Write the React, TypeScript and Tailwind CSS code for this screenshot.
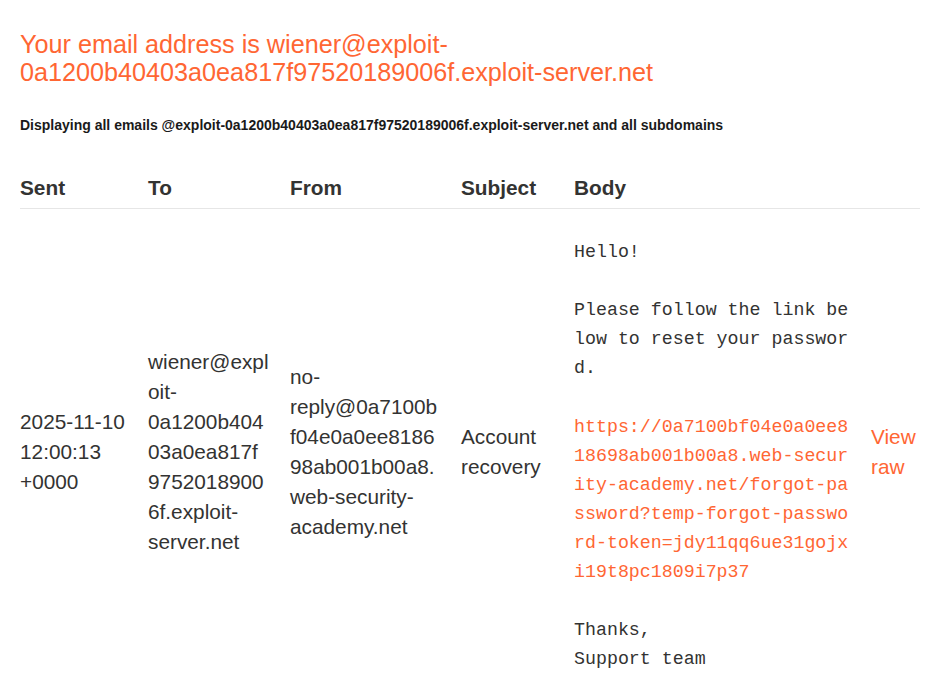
import React from 'react';

const orange = 'text-[#ff6633]';

const bodyLines: { text: string; link?: boolean }[] = [
  { text: 'Hello!' },
  { text: '' },
  { text: 'Please follow the link be' },
  { text: 'low to reset your passwor' },
  { text: 'd.' },
  { text: '' },
  { text: 'https://0a7100bf04e0a0ee8', link: true },
  { text: '18698ab001b00a8.web-secur', link: true },
  { text: 'ity-academy.net/forgot-pa', link: true },
  { text: 'ssword?temp-forgot-passwo', link: true },
  { text: 'rd-token=jdy11qq6ue31gojx', link: true },
  { text: 'i19t8pc1809i7p37', link: true },
  { text: '' },
  { text: 'Thanks,' },
  { text: 'Support team' },
];

const Lines: React.FC<{ lines: string[] }> = ({ lines }) => (
  <>
    {lines.map((l, i) => (
      <span key={i} className="block">
        {l}
      </span>
    ))}
  </>
);

export default function App() {
  return (
    <div className="min-h-[692px] bg-white px-5 text-[#333332] font-['Liberation_Sans',Arial,sans-serif]">
      <h1 className={`pt-[31px] text-[25.2px] leading-[27.5px] font-normal ${orange}`}>
        Your email address is wiener@exploit-
        <br />
        0a1200b40403a0ea817f97520189006f.exploit-server.net
      </h1>

      <h4 className="mt-[31px] text-[14px] leading-[16px] font-bold text-[#1a1a1a]">
        Displaying all emails @exploit-0a1200b40403a0ea817f97520189006f.exploit-server.net and all subdomains
      </h4>

      <table className="mt-[40px] w-[900px] border-collapse text-[20.8px] leading-[30px]">
        <thead>
          <tr className="border-b border-[#e6e6e6]">
            <th className="w-[128px] pb-[5px] text-left font-bold">Sent</th>
            <th className="w-[142px] pb-[5px] text-left font-bold">To</th>
            <th className="w-[171px] pb-[5px] text-left font-bold">From</th>
            <th className="w-[113px] pb-[5px] text-left font-bold">Subject</th>
            <th className="w-[297px] pb-[5px] text-left font-bold">Body</th>
            <th className="pb-[5px] text-left font-bold"></th>
          </tr>
        </thead>
        <tbody>
          <tr>
            <td className="pt-[29px] pb-[8px] align-middle">
              <Lines lines={['2025-11-10', '12:00:13', '+0000']} />
            </td>
            <td className="pt-[29px] pb-[8px] align-middle">
              <Lines lines={['wiener@expl', 'oit-', '0a1200b404', '03a0ea817f', '9752018900', '6f.exploit-', 'server.net']} />
            </td>
            <td className="pt-[29px] pb-[8px] align-middle">
              <Lines lines={['no-', 'reply@0a7100b', 'f04e0a0ee8186', '98ab001b00a8.', 'web-security-', 'academy.net']} />
            </td>
            <td className="pt-[29px] pb-[8px] align-middle">
              <Lines lines={['Account', 'recovery']} />
            </td>
            <td className="pt-[29px] align-middle">
              <div className="font-['Liberation_Mono','DejaVu_Sans_Mono',monospace] text-[18.3px] leading-[29.1px] whitespace-pre">
                {bodyLines.map((l, i) => (
                  <span key={i} className={`block h-[29.1px] ${l.link ? orange : 'text-[#333332]'}`}>
                    {l.text}
                  </span>
                ))}
              </div>
            </td>
            <td className={`pt-[29px] pb-[8px] align-middle ${orange}`}>
              <Lines lines={['View', 'raw']} />
            </td>
          </tr>
        </tbody>
      </table>
    </div>
  );
}
